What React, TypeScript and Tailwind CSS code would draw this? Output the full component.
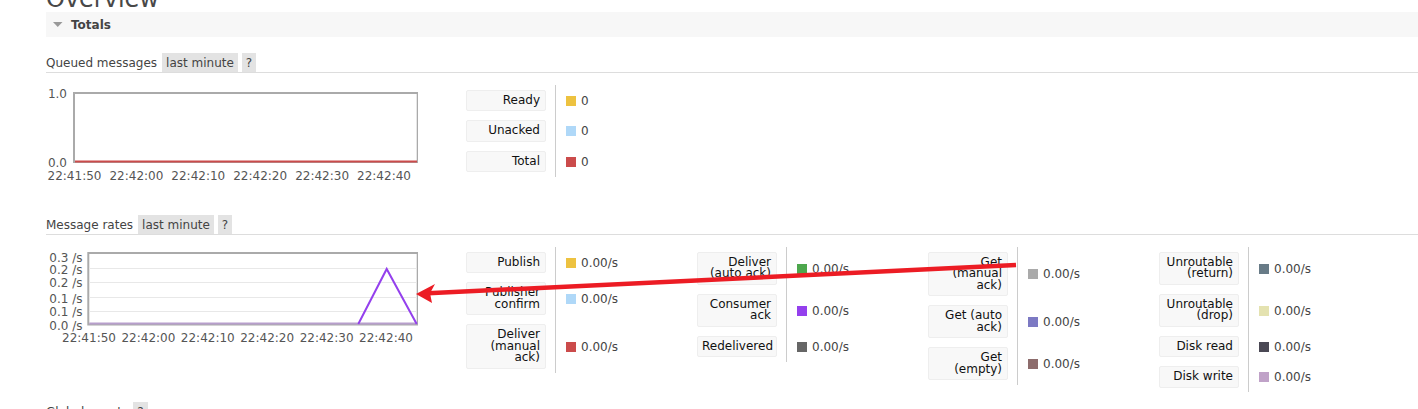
import React from "react";

type Item = { label: string; swatch: string; value: string };

const queued: Item[][] = [
  [
    { label: "Ready", swatch: "bg-[#edc240]", value: "0" },
    { label: "Unacked", swatch: "bg-[#afd8f8]", value: "0" },
    { label: "Total", swatch: "bg-[#cb4b4b]", value: "0" },
  ],
];

const rates: Item[][] = [
  [
    { label: "Publish", swatch: "bg-[#edc240]", value: "0.00/s" },
    { label: "Publisher confirm", swatch: "bg-[#afd8f8]", value: "0.00/s" },
    { label: "Deliver (manual ack)", swatch: "bg-[#cb4b4b]", value: "0.00/s" },
  ],
  [
    { label: "Deliver (auto ack)", swatch: "bg-[#4da74d]", value: "0.00/s" },
    { label: "Consumer ack", swatch: "bg-[#9440ed]", value: "0.00/s" },
    { label: "Redelivered", swatch: "bg-[#666666]", value: "0.00/s" },
  ],
  [
    { label: "Get (manual ack)", swatch: "bg-[#aaaaaa]", value: "0.00/s" },
    { label: "Get (auto ack)", swatch: "bg-[#7c79c3]", value: "0.00/s" },
    { label: "Get (empty)", swatch: "bg-[#8d6c6c]", value: "0.00/s" },
  ],
  [
    { label: "Unroutable (return)", swatch: "bg-[#687b87]", value: "0.00/s" },
    { label: "Unroutable (drop)", swatch: "bg-[#e4e2b0]", value: "0.00/s" },
    { label: "Disk read", swatch: "bg-[#4a4854]", value: "0.00/s" },
    { label: "Disk write", swatch: "bg-[#c0a2c8]", value: "0.00/s" },
  ],
];

const times = ["22:41:50", "22:42:00", "22:42:10", "22:42:20", "22:42:30", "22:42:40"];

function SectionHeading({ title }: { title: string }) {
  return (
    <div className="flex h-[20px] items-stretch border-b border-[#ddd]">
      <span className="pt-[1px] leading-[18px]">{title}</span>
      <span className="ml-[5px] bg-[#e3e3e3] px-[4px] pt-[1px] leading-[18px]">last minute</span>
      <span className="ml-[4px] bg-[#e3e3e3] px-[4px] pt-[1px] leading-[18px]">?</span>
    </div>
  );
}

function LegendColumn({ items }: { items: Item[] }) {
  return (
    <div className="flex w-[231px] flex-col">
      {items.map((it) => (
        <div key={it.label} className="flex">
          <div className="py-[4.5px]">
            <div className="w-[80px] rounded-[2px] border border-[#eee] bg-[#f8f8f8] py-[4px] pl-[4px] pr-[5px] text-right leading-[11.5px] text-[#111]">
              {it.label}
            </div>
          </div>
          <div className="ml-[9px] flex items-center border-l border-[#ccc] pl-[10px] pt-[1px] text-[#444]">
            <span className={`mr-[5px] inline-block h-[10px] w-[10px] ${it.swatch}`} />
            {it.value}
          </div>
        </div>
      ))}
    </div>
  );
}

function QueuedChart() {
  return (
    <svg width="372" height="100" className="shrink-0" fontFamily="DejaVu Sans, sans-serif" fontSize="12">
      <rect x="28" y="8" width="343.7" height="69" fill="#fff" stroke="#aaa" strokeWidth="2" />
      <line x1="29" y1="76.5" x2="371" y2="76.5" stroke="#cb4b4b" strokeWidth="2" />
      <text x="21" y="13" textAnchor="end" fill="#555">1.0</text>
      <text x="21" y="82" textAnchor="end" fill="#555">0.0</text>
      {times.map((t, i) => (
        <text key={t} x={28.5 + 61.9 * i} y="94.8" textAnchor="middle" fill="#555">
          {t}
        </text>
      ))}
    </svg>
  );
}

function RatesChart() {
  const yLabels = [
    ["0.3 /s", 14.6],
    ["0.2 /s", 27.2],
    ["0.2 /s", 40.2],
    ["0.1 /s", 55.6],
    ["0.1 /s", 68.9],
    ["0.0 /s", 82.9],
  ] as const;
  return (
    <svg width="372" height="100" className="shrink-0" fontFamily="DejaVu Sans, sans-serif" fontSize="12">
      <rect x="42.3" y="6" width="329.4" height="71.5" fill="#fff" stroke="#aaa" strokeWidth="2" />
      {[21.5, 35.5, 50.5, 64.5].map((y) => (
        <line key={y} x1="43.3" y1={y} x2="370.7" y2={y} stroke="#e8e8e8" strokeWidth="1" />
      ))}
      <line x1="43.3" y1="76.6" x2="370.7" y2="76.6" stroke="#b79fcc" strokeWidth="2" />
      <polyline points="312.3,77 340.7,22 370.7,77" fill="none" stroke="#9440ed" strokeWidth="2" />
      {yLabels.map(([l, y], i) => (
        <text key={i} x="36.5" y={y} textAnchor="end" fill="#555">
          {l}
        </text>
      ))}
      {times.map((t, i) => (
        <text key={t} x={43 + 59.4 * i} y="94.6" textAnchor="middle" fill="#555">
          {t}
        </text>
      ))}
    </svg>
  );
}

export default function App() {
  return (
    <div className="relative h-[409px] w-[1418px] overflow-hidden bg-white font-['DejaVu_Sans',sans-serif] text-[12px] text-[#444]">
      <div className="pl-[46px]">
        <h1 className="mt-[-13px] text-[24px] leading-[24px] text-[#484848]">Overview</h1>

        <div className="mt-[1px] flex h-[25px] items-center bg-[#f7f7f7] pl-[7px]">
          <svg width="10" height="6" className="shrink-0">
            <polygon points="0,0 9.5,0 4.75,5" fill="#999" />
          </svg>
          <span className="ml-[8px] font-bold text-[#444]">Totals</span>
        </div>

        <div className="mt-[16px]">
          <SectionHeading title="Queued messages" />
          <div className="mt-[12px] flex items-start">
            <QueuedChart />
            <div className="ml-[48px] flex">
              {queued.map((col, i) => (
                <LegendColumn key={i} items={col} />
              ))}
            </div>
          </div>
        </div>

        <div className="mt-[30px]">
          <SectionHeading title="Message rates" />
          <div className="mt-[12px] flex items-start">
            <RatesChart />
            <div className="ml-[48px] flex">
              {rates.map((col, i) => (
                <LegendColumn key={i} items={col} />
              ))}
            </div>
          </div>
        </div>

        <div className="mt-[10px] flex h-[20px] items-stretch">
          <span className="pt-[1px] leading-[18px]">Global counts</span>
          <span className="ml-[5px] bg-[#e3e3e3] px-[4px] pt-[1px] leading-[18px]">?</span>
        </div>
      </div>

      {/* annotation arrow drawn over the page */}
      <svg width="1418" height="409" className="pointer-events-none absolute left-0 top-0">
        <line x1="1016" y1="265" x2="428" y2="293.3" stroke="#ec1c24" strokeWidth="4.5" />
        <polygon points="416,294 435,284 430,293.3 432,303" fill="#ec1c24" />
      </svg>
    </div>
  );
}
